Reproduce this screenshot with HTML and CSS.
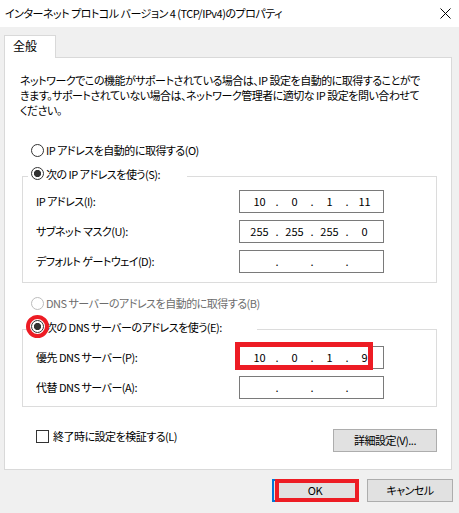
FILE: index.html
```html
<!DOCTYPE html>
<html lang="ja">
<head>
<meta charset="utf-8">
<title>プロパティ</title>
<link rel="stylesheet" href="styles.css">
</head>
<body>
<div class="titlebar">
  <span class="title">インターネット プロトコル バージョン 4 (TCP/IPv4)のプロパティ</span>
  <svg class="close" width="11" height="11" viewBox="0 0 11 11"><path d="M0.5 0.5L10.5 10.5M10.5 0.5L0.5 10.5" stroke="#000" stroke-width="1" fill="none"/></svg>
</div>
<div class="main">
  <div class="tab">全般</div>
  <div class="panel">
    <p class="desc">ネットワークでこの機能がサポートされている場合は、IP 設定を自動的に取得することがで<br>きます。サポートされていない場合は、ネットワーク管理者に適切な IP 設定を問い合わせて<br>ください。</p>

    <div class="radio-row r-auto-ip"><span class="radio"></span><span>IP アドレスを自動的に取得する(O)</span></div>

    <fieldset class="group g-ip">
      <legend class="lg-ip"><span class="radio checked"></span><span>次の IP アドレスを使う(S):</span></legend>
      <div class="fields">
        <span class="label">IP アドレス(I):</span>
        <div class="ip"><span>10</span><i>.</i><span>0</span><i>.</i><span>1</span><i>.</i><span>11</span></div>
        <span class="label">サブネット マスク(U):</span>
        <div class="ip"><span>255</span><i>.</i><span>255</span><i>.</i><span>255</span><i>.</i><span>0</span></div>
        <span class="label">デフォルト ゲートウェイ(D):</span>
        <div class="ip"><span></span><i>.</i><span></span><i>.</i><span></span><i>.</i><span></span></div>
      </div>
    </fieldset>

    <div class="radio-row r-auto-dns disabled"><span class="radio"></span><span>DNS サーバーのアドレスを自動的に取得する(B)</span></div>

    <fieldset class="group g-dns">
      <legend class="lg-dns"><span class="radio checked marked"></span><span>次の DNS サーバーのアドレスを使う(E):</span></legend>
      <div class="fields">
        <span class="label">優先 DNS サーバー(P):</span>
        <div class="ip highlighted"><span>10</span><i>.</i><span>0</span><i>.</i><span>1</span><i>.</i><span>9</span></div>
        <span class="label">代替 DNS サーバー(A):</span>
        <div class="ip"><span></span><i>.</i><span></span><i>.</i><span></span><i>.</i><span></span></div>
      </div>
    </fieldset>

    <div class="check-row">
      <div class="check-item"><span class="checkbox"></span><span>終了時に設定を検証する(L)</span></div>
      <button class="btn btn-adv">詳細設定(V)...</button>
    </div>
  </div>
  <div class="footer">
    <button class="btn btn-ok">OK</button>
    <button class="btn btn-cancel">キャンセル</button>
  </div>
</div>
</body>
</html>
```
FILE: styles.css
```css
*, *::before, *::after { box-sizing: border-box; }
html, body { margin: 0; padding: 0; }
body {
  width: 459px;
  height: 513px;
  overflow: hidden;
  background: #f0f0f0;
  color: #000;
  font-family: "Noto Sans CJK JP", "Noto Sans", sans-serif;
  font-size: 11px;
  line-height: 15px;
  letter-spacing: -0.5px;
  font-feature-settings: "palt";
}
.titlebar {
  height: 27px;
  background: #fff;
  display: flex;
  align-items: center;
  justify-content: space-between;
  padding: 0 8px 0 5px;
}
.title { white-space: nowrap; }
.close { display: block; margin-top: -1px; }

.main { padding: 8px 0 0 4px; }
.tab {
  position: relative;
  z-index: 1;
  width: 52px;
  height: 23px;
  margin-bottom: -1px;
  padding: 2px 0 0 8px;
  background: #fff;
  border: 1px solid #d9d9d9;
  border-bottom: none;
  font-size: 12px;
  letter-spacing: 0;
}
.panel {
  width: 448px;
  background: #fff;
  border: 1px solid #d9d9d9;
  padding-bottom: 17px;
}
.desc {
  margin: 15px 0 0 15px;
  white-space: nowrap;
}
.radio-row {
  display: flex;
  align-items: center;
  height: 15px;
  padding-left: 26px;
  white-space: nowrap;
}
.r-auto-ip { margin-top: 25px; }
.r-auto-dns { margin-top: 13px; }
.disabled { color: #6d6d6d; }
.disabled .radio { border-color: #bcbcbc; }

.radio {
  flex: none;
  position: relative;
  width: 13px;
  height: 13px;
  margin-right: 2px;
  border: 1px solid #333;
  border-radius: 50%;
  background: #fff;
}
.radio.checked {
  background: radial-gradient(circle at center, #333 0 3.3px, #fff 3.9px);
}
.marked::after {
  content: "";
  position: absolute;
  left: -6px;
  top: -6px;
  width: 23px;
  height: 23px;
  border: 4px solid #ed1c24;
  border-radius: 50%;
}

.group {
  margin: 9px 0 0 17px;
  padding: 0;
  width: 415px;
  min-width: 0;
  border: 1px solid #dcdcdc;
}
.group legend {
  display: flex;
  align-items: flex-start;
  height: 18px;
  margin-left: 5px;
  padding: 0 0 3px 3px;
  white-space: nowrap;
}
.lg-ip { width: 159px; }
.lg-dns { width: 229px; }
.fields {
  display: grid;
  grid-template-columns: 203px 145px;
  grid-auto-rows: 23px;
  row-gap: 7px;
  align-items: center;
  padding-left: 13px;
}
.g-ip .fields { margin-top: 5px; padding-bottom: 9px; }
.g-dns .fields { margin-top: 8px; padding-bottom: 7px; }
.label { white-space: nowrap; }
.ip {
  position: relative;
  height: 23px;
  border: 1px solid #7a7a7a;
  background: #fff;
  display: grid;
  grid-template-columns: 29px 6px 29px 6px 29px 6px 29px;
  align-items: center;
  padding-left: 5px;
  text-align: center;
  letter-spacing: 0;
}
.ip i { font-style: normal; }
.highlighted::after {
  content: "";
  position: absolute;
  left: -5px;
  top: -5px;
  width: 138px;
  height: 28px;
  border: 5px solid #ed1c24;
}

.check-row {
  display: flex;
  align-items: flex-start;
  justify-content: space-between;
  margin-top: 22px;
  padding: 0 14px 0 31px;
}
.check-item {
  display: flex;
  align-items: center;
  height: 15px;
  white-space: nowrap;
}
.checkbox {
  flex: none;
  width: 13px;
  height: 13px;
  margin-right: 4px;
  border: 1px solid #333;
  background: #fff;
}
.btn {
  font: inherit;
  letter-spacing: inherit;
  font-feature-settings: "palt";
  color: #000;
  height: 23px;
  padding: 0;
  background: #e1e1e1;
  border: 1px solid #adadad;
  line-height: 15px;
}
.btn-adv { width: 104px; }
.footer {
  display: flex;
  justify-content: flex-end;
  gap: 9px;
  margin-top: 9px;
  padding-right: 6px;
}
.btn-ok, .btn-cancel { width: 86px; }
.btn-ok {
  position: relative;
  border: 2px solid #0078d7;
}
.btn-ok::after {
  content: "";
  position: absolute;
  left: 1px;
  top: -2px;
  right: -3px;
  bottom: -2px;
  border: 4px solid #ed1c24;
}
```
